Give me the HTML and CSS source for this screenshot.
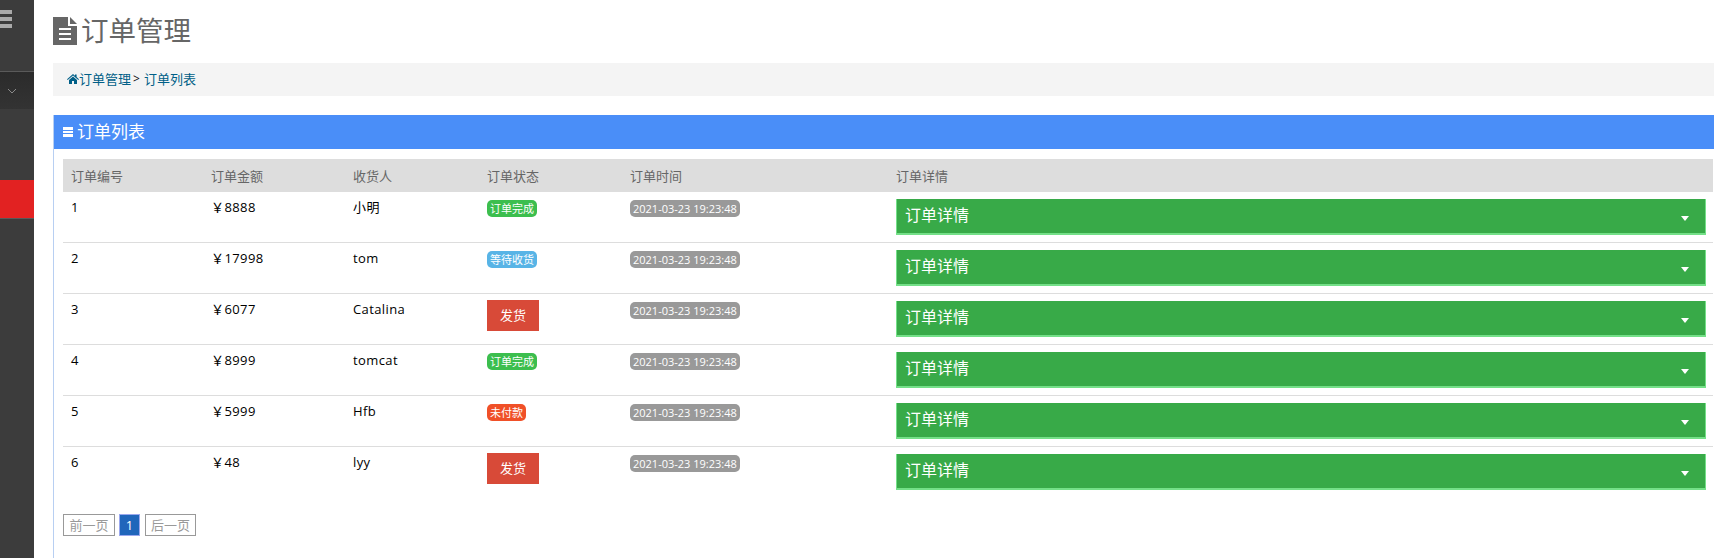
FILE: index.html
```html
<!DOCTYPE html>
<html lang="zh">
<head>
<meta charset="utf-8">
<title>订单管理</title>
<link rel="stylesheet" href="styles.css">
</head>
<body>
<div class="app">
  <aside class="sidebar">
    <div class="toggle"><span></span><span></span><span></span></div>
    <div class="sub-open">
      <svg width="10" height="6" viewBox="0 0 10 6"><path d="M1 1l4 4 4-4" fill="none" stroke="#8a8a8a" stroke-width="1"/></svg>
    </div>
    <div class="nav-gap"></div>
    <div class="nav-active"></div>
  </aside>
  <main class="main">
    <h1 class="page-title">
      <svg class="title-icon" width="24" height="28" viewBox="0 0 24 28"><path fill="#666" d="M0 0h15v9h9v19H0z"/><path fill="#666" d="M17 0l7 7h-7z"/><path fill="#fff" d="M6 11h12v2H6zM6 16h12v2H6zM6 21h12v2H6z"/></svg>订单管理
    </h1>
    <nav class="crumbs">
      <svg class="home" width="12" height="10" viewBox="0 0 12 10"><path fill="#005f87" d="M6 0l2 1.700V.6h1.600v2.500L12 5.200l-.7.7L6 1.500.7 5.900 0 5.200zM2 6l4-3.400L10 6v4H7V7H5v3H2z"/></svg><a>订单管理</a><span class="sep">&gt;</span><a>订单列表</a>
    </nav>
    <section class="panel">
      <header class="panel-head">
        <span class="bars"><i></i><i></i><i></i></span>订单列表
      </header>
      <div class="panel-body">
        <table class="orders">
          <colgroup><col class="c1"><col class="c2"><col class="c3"><col class="c4"><col class="c5"><col></colgroup>
          <thead>
            <tr><th>订单编号</th><th>订单金额</th><th>收货人</th><th>订单状态</th><th>订单时间</th><th>订单详情</th></tr>
          </thead>
          <tbody>
            <tr><td>1</td><td>￥8888</td><td>小明</td><td><span class="badge green">订单完成</span></td><td><span class="badge grey">2021-03-23 19:23:48</span></td><td><div class="detail">订单详情<b class="caret"></b></div></td></tr>
            <tr><td>2</td><td>￥17998</td><td>tom</td><td><span class="badge blue">等待收货</span></td><td><span class="badge grey">2021-03-23 19:23:48</span></td><td><div class="detail">订单详情<b class="caret"></b></div></td></tr>
            <tr><td>3</td><td>￥6077</td><td>Catalina</td><td><button class="ship">发货</button></td><td><span class="badge grey">2021-03-23 19:23:48</span></td><td><div class="detail">订单详情<b class="caret"></b></div></td></tr>
            <tr><td>4</td><td>￥8999</td><td>tomcat</td><td><span class="badge green">订单完成</span></td><td><span class="badge grey">2021-03-23 19:23:48</span></td><td><div class="detail">订单详情<b class="caret"></b></div></td></tr>
            <tr><td>5</td><td>￥5999</td><td>Hfb</td><td><span class="badge orange">未付款</span></td><td><span class="badge grey">2021-03-23 19:23:48</span></td><td><div class="detail">订单详情<b class="caret"></b></div></td></tr>
            <tr><td>6</td><td>￥48</td><td>lyy</td><td><button class="ship">发货</button></td><td><span class="badge grey">2021-03-23 19:23:48</span></td><td><div class="detail">订单详情<b class="caret"></b></div></td></tr>
          </tbody>
        </table>
        <div class="pager"><a class="pg">前一页</a><a class="pg cur">1</a><a class="pg next">后一页</a></div>
      </div>
    </section>
  </main>
</div>
</body>
</html>
```

FILE: styles.css
```css
* { box-sizing: border-box; }
html, body { margin: 0; height: 558px; overflow: hidden; background: #fff; }
body { font-family: "Open Sans", "Noto Sans CJK SC", sans-serif; font-size: 13px; color: #000; }
.app { display: flex; height: 558px; }

.sidebar { width: 34px; flex: none; background: #3c3c3c; }
.toggle { height: 71px; padding-top: 10px; }
.toggle span { display: block; width: 12px; height: 4px; margin-bottom: 4px; background: #aaa; }
.toggle span:nth-child(2) { margin-bottom: 3px; margin-top: -1px; }
.toggle span:nth-child(1) { margin-bottom: 4px; }
.sub-open { height: 38px; border-top: 1px solid #5a5a5a; background: linear-gradient(#2b2b2b, #333); display: flex; align-items: center; padding-left: 7px; }
.nav-gap { height: 71px; }
.nav-active { height: 39px; background: #e22222; border-bottom: 1px solid #5a5a5a; }

.main { flex: 1; min-width: 0; padding-left: 19px; display: flex; flex-direction: column; }
.page-title { margin: 0; height: 63px; padding-top: 17px; font-size: 27.5px; font-weight: 400; line-height: 28px; color: #666; display: flex; align-items: flex-start; white-space: nowrap; }
.title-icon { margin-right: 4px; flex: none; }

.crumbs { height: 33px; padding-bottom: 2px; background: #f4f4f4; padding-left: 14px; display: flex; align-items: center; font-size: 13px; color: #005f87; }
.crumbs .sep { margin: 0 4px 0 2px; color: #111; font-size: 12px; }

.panel { margin-top: 19px; flex: 1; border-left: 1px solid #b8cff2; }
.panel-head { height: 34px; padding-bottom: 3px; background: #4a8ef8; color: #fff; font-size: 17px; padding-left: 9px; display: flex; align-items: center; }
.bars { display: flex; flex-direction: column; gap: 1px; width: 10px; margin-right: 4px; margin-top: 3px; }
.bars i { display: block; height: 2.4px; background: #fff; }
.panel-body { padding: 10px 1px 0 9px; }

.orders { width: 100%; table-layout: fixed; border-collapse: collapse; }
.c1 { width: 140px; }
.c2 { width: 142px; }
.c3 { width: 134px; }
.c4 { width: 143px; }
.c5 { width: 266px; }
.orders th { height: 33px; padding: 0 8px 1px; background: #ddd; color: #666; font-weight: 400; font-size: 13px; text-align: left; }
.orders td { height: 51px; padding: 7px 8px 0; vertical-align: top; border-top: 1px solid #ddd; line-height: 17px; letter-spacing: .4px; }
.orders td:last-child { padding-right: 7px; }
.orders tbody tr:first-child td { border-top: 0; height: 50px; }

.badge { display: inline-block; height: 17px; line-height: 17px; padding: 0 3px; border-radius: 5px; color: #fff; font-size: 11px; letter-spacing: 0; margin-top: 1px; white-space: nowrap; vertical-align: top; }
.green { background: #3cbe4e; }
.blue { background: #58b4e6; }
.orange { background: #f05028; }
.grey { background: #999; }

.ship { display: block; width: 52px; height: 31px; margin: -1px 0 0; padding: 0; border: 0; background: #d84a38; color: #fff; font: inherit; letter-spacing: 0; }

.detail { position: relative; height: 36px; background: #38aa48; border-style: solid; border-color: #74e088; border-width: 0 1px 2px 1px; color: #fff; font-size: 16px; line-height: 32px; padding-left: 8px; letter-spacing: 0; }
.caret { position: absolute; right: 16px; top: 17px; width: 0; height: 0; border-left: 4px solid transparent; border-right: 4px solid transparent; border-top: 5px solid #fff; }

.pager { display: flex; margin-top: 17px; }
.pg { height: 22px; width: 52px; border: 1px solid #999; color: #999; line-height: 20px; text-align: center; font-size: 13px; }
.pg.cur { width: 21px; margin: 0 5px 0 4px; background: #2066bb; border-color: #9aa8ee; color: #fff; }
.pg.next { width: 51px; }
```
